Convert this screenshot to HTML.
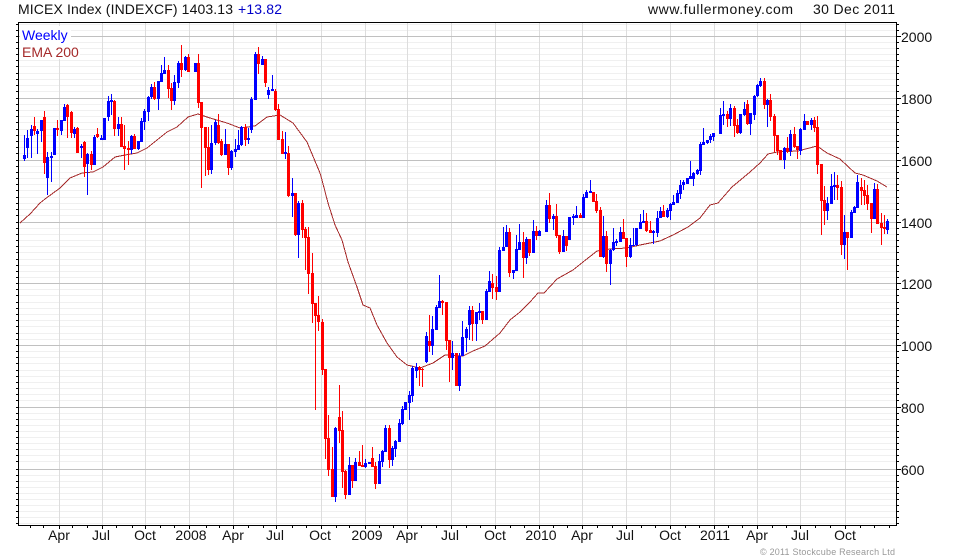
<!DOCTYPE html>
<html><head><meta charset="utf-8"><title>MICEX Index</title>
<style>html,body{margin:0;padding:0;background:#fff;width:980px;height:560px;overflow:hidden}svg{display:block}text{font-family:"Liberation Sans",Arial,sans-serif;font-size:14px;fill:#111}</style></head>
<body>
<svg width="980" height="560" viewBox="0 0 980 560" xmlns="http://www.w3.org/2000/svg">
<g shape-rendering="crispEdges" fill="none">
<path stroke="#f0f0f0" d="M19 24.5H896M19 30.5H896M19 42.5H896M19 48.5H896M19 54.5H896M19 60.5H896M19 66.5H896M19 73.5H896M19 79.5H896M19 85.5H896M19 91.5H896M19 104.5H896M19 110.5H896M19 116.5H896M19 122.5H896M19 129.5H896M19 135.5H896M19 141.5H896M19 147.5H896M19 153.5H896M19 166.5H896M19 172.5H896M19 178.5H896M19 184.5H896M19 190.5H896M19 197.5H896M19 203.5H896M19 209.5H896M19 215.5H896M19 228.5H896M19 234.5H896M19 240.5H896M19 246.5H896M19 252.5H896M19 259.5H896M19 265.5H896M19 271.5H896M19 277.5H896M19 289.5H896M19 295.5H896M19 302.5H896M19 308.5H896M19 314.5H896M19 320.5H896M19 326.5H896M19 333.5H896M19 339.5H896M19 351.5H896M19 357.5H896M19 363.5H896M19 370.5H896M19 376.5H896M19 382.5H896M19 388.5H896M19 394.5H896M19 400.5H896M19 413.5H896M19 419.5H896M19 425.5H896M19 431.5H896M19 437.5H896M19 443.5H896M19 449.5H896M19 455.5H896M19 461.5H896M19 475.5H896M19 481.5H896M19 487.5H896M19 493.5H896M19 499.5H896M19 505.5H896M19 511.5H896M19 517.5H896M19 523.5H896"/>
<path stroke="#dddddd" d="M59.5 23V525M102.5 23V525M145.5 23V525M189.5 23V525M233.5 23V525M276.5 23V525M321.5 23V525M365.5 23V525M407.5 23V525M451.5 23V525M495.5 23V525M539.5 23V525M582.5 23V525M626.5 23V525M670.5 23V525M714.5 23V525M757.5 23V525M800.5 23V525M845.5 23V525"/>
<path stroke="#c0c0c0" d="M19 36.5H896M19 98.5H896M19 160.5H896M19 222.5H896M19 283.5H896M19 345.5H896M19 407.5H896M19 469.5H896"/>
</g>
<rect x="20" y="26" width="51" height="17" fill="#fff"/>
<rect x="20" y="43" width="60" height="16" fill="#fff"/>
<path fill="none" shape-rendering="crispEdges" stroke="#a52a2a" stroke-width="1" d="M20 223L30 214L40 203L45 199L60 188L70 178L82 173L93 172L103 167L115 157L125 155L137 153L147 148L157 140L167 132L177 127L188 117L198 114L210 118L227 123L240 128L255 126L267 117L280 115L293 123L307 142L320 173L322 180L328 203L335 225L342 240L348 262L357 287L363 305L370 308L377 325L387 343L397 357L407 365L420 368L433 363L445 355L463 356L473 351L485 346L500 333L510 320L520 312L530 302L538 293L544 293L557 279L573 270L583 262L597 251L610 249L627 248L640 245L650 243L660 241L673 235L688 227L700 218L710 205L718 203L732 187L750 172L760 163L768 154L777 152L798 151L817 146L827 153L840 159L855 173L863 175L877 181L887 187"/>
<g shape-rendering="crispEdges" fill="none">
<path stroke="#0000ff" d="M24.5 135V161M27.5 130V158M31.5 125V158M37.5 129V154M41.5 120V142M47.5 152V195M51.5 152V182M54.5 128V155M61.5 120V135M64.5 104V121M74.5 127V138M81.5 144V158M87.5 153V195M94.5 135V165M101.5 135V140M104.5 118V140M108.5 96V121M111.5 94V115M118.5 117V136M131.5 135V154M138.5 141V150M141.5 118V142M144.5 109V130M148.5 96V121M151.5 84V99M158.5 81V110M161.5 65V82M164.5 57V74M174.5 75V105M178.5 61V88M185.5 56V71M195.5 63V72M211.5 125V174M215.5 120V145M225.5 129V155M231.5 150V170M235.5 139V157M238.5 130V150M241.5 126V146M248.5 128V144M251.5 97V133M255.5 52V100M262.5 56V65M268.5 87V99M272.5 75V91M285.5 132V159M292.5 178V217M298.5 201V258M335.5 427V502M349.5 457V495M355.5 458V481M365.5 459V468M369.5 462V464M379.5 454V484M382.5 450V467M385.5 425V452M392.5 446V466M395.5 440V457M399.5 419V442M402.5 406V425M405.5 402V410M409.5 391V420M412.5 366V402M416.5 363V378M426.5 332V363M432.5 316V355M436.5 305V330M439.5 275V308M452.5 341V370M459.5 353V391M462.5 321V352M466.5 327V352M469.5 306V340M476.5 312V341M479.5 303V320M486.5 289V320M489.5 271V292M499.5 247V292M503.5 227V251M506.5 225V247M513.5 270V279M516.5 235V271M519.5 224V250M526.5 237V264M533.5 220V253M539.5 230V236M546.5 200V232M553.5 214V230M563.5 230V252M569.5 217V240M573.5 214V225M576.5 206V218M583.5 194V218M586.5 190V198M590.5 180V193M603.5 216V258M610.5 249V285M613.5 228V251M616.5 239V246M620.5 227V242M630.5 238V258M633.5 228V246M636.5 228V246M640.5 214V229M643.5 210V223M653.5 230V244M657.5 211V237M660.5 207V218M667.5 208V218M670.5 203V220M673.5 195V205M677.5 190V203M680.5 180V199M683.5 180V190M687.5 178V184M690.5 161V179M693.5 172V186M697.5 169V175M700.5 142V175M703.5 128V145M707.5 140V144M710.5 134V143M713.5 133V141M720.5 108V134M723.5 101V125M730.5 104V126M740.5 114V134M744.5 102V116M750.5 113V135M754.5 95V120M757.5 84V97M760.5 78V87M767.5 99V127M784.5 147V169M790.5 130V156M800.5 128V155M804.5 114V130M811.5 118V130M827.5 197V220M831.5 174V204M834.5 172V200M844.5 215V259M851.5 210V238M854.5 206V213M857.5 175V208M874.5 183V219M887.5 219V234"/>
<path stroke="#0000ff" stroke-width="3" d="M24.5 155V159M27.5 138V148M31.5 129V136M37.5 131V134M41.5 120V131M47.5 157V178M51.5 156V158M54.5 128V155M61.5 120V131M64.5 107V121M74.5 129V134M81.5 146V148M87.5 154V164M94.5 137V165M101.5 138V140M104.5 118V140M108.5 101V117M111.5 100V102M118.5 124V129M131.5 136V150M138.5 141V149M141.5 121V142M144.5 111V122M148.5 97V112M151.5 87V97M158.5 81V99M161.5 73V82M164.5 70V74M174.5 82V101M178.5 63V83M185.5 57V70M195.5 63V72M211.5 143V170M215.5 122V143M225.5 144V155M231.5 151V168M235.5 149V152M238.5 145V150M241.5 127V145M248.5 138V140M251.5 99V130M255.5 54V100M262.5 59V65M268.5 90V95M272.5 89V91M285.5 152V154M292.5 193V196M298.5 203V235M335.5 428V497M349.5 465V495M355.5 462V481M365.5 463V467M369.5 462V464M379.5 461V484M382.5 451V462M385.5 428V452M392.5 448V460M395.5 441V449M399.5 423V442M402.5 409V424M405.5 402V410M409.5 395V403M412.5 368V396M416.5 367V371M426.5 336V362M432.5 329V346M436.5 307V330M439.5 301V308M452.5 353V358M459.5 356V386M462.5 337V356M466.5 329V338M469.5 310V325M476.5 312V324M479.5 311V313M486.5 291V320M489.5 281V292M499.5 250V292M503.5 247V251M506.5 232V247M513.5 270V273M516.5 249V271M519.5 242V250M526.5 239V258M533.5 231V253M539.5 231V236M546.5 205V232M553.5 216V219M563.5 236V252M569.5 217V240M573.5 216V218M576.5 215V218M583.5 197V218M586.5 192V198M590.5 191V193M603.5 236V257M610.5 250V264M613.5 242V250M616.5 241V243M620.5 232V242M630.5 245V257M633.5 245V246M636.5 228V245M640.5 222V229M643.5 221V223M653.5 231V233M657.5 218V233M660.5 211V218M667.5 210V217M670.5 204V211M673.5 202V205M677.5 193V203M680.5 185V194M683.5 182V185M687.5 178V184M690.5 176V179M693.5 173V179M697.5 170V174M700.5 144V171M703.5 142V145M707.5 140V143M710.5 136V140M713.5 133V137M720.5 115V134M723.5 114V116M730.5 108V119M740.5 114V133M744.5 109V115M750.5 113V124M754.5 96V115M757.5 85V96M760.5 81V86M767.5 100V105M784.5 148V160M790.5 134V151M800.5 129V151M804.5 121V130M811.5 120V125M827.5 203V211M831.5 186V204M834.5 185V187M844.5 232V245M851.5 212V238M854.5 207V213M857.5 182V208M874.5 189V219M887.5 221V230"/>
<path stroke="#ff0000" d="M34.5 117V135M44.5 111V174M57.5 120V136M67.5 104V138M71.5 111V138M77.5 127V153M84.5 141V177M91.5 151V170M97.5 128V138M114.5 100V136M121.5 117V147M124.5 125V170M128.5 141V165M134.5 134V149M154.5 82V100M168.5 65V98M171.5 83V110M181.5 45V77M188.5 54V72M198.5 54V108M201.5 102V188M205.5 127V176M208.5 127V175M218.5 114V144M221.5 139V156M228.5 144V175M245.5 124V146M258.5 47V74M265.5 59V87M275.5 89V111M278.5 104V140M282.5 131V154M288.5 146V197M295.5 193V236M302.5 200V238M305.5 227V270M308.5 227V294M312.5 253V323M315.5 303V410M318.5 296V331M322.5 319V375M325.5 369V459M328.5 415V476M332.5 447V497M339.5 385V443M342.5 411V488M345.5 470V499M352.5 465V488M359.5 451V466M362.5 445V467M372.5 447V467M375.5 462V489M389.5 425V468M419.5 366V386M422.5 368V387M429.5 315V352M442.5 300V315M446.5 302V350M449.5 340V382M456.5 353V386M472.5 306V341M482.5 311V324M492.5 274V299M496.5 276V300M509.5 228V277M523.5 232V278M529.5 239V256M536.5 226V240M549.5 193V223M556.5 204V238M559.5 235V254M566.5 236V251M580.5 213V218M593.5 192V202M596.5 194V213M600.5 207V257M606.5 231V272M623.5 219V239M626.5 238V267M646.5 213V232M650.5 221V233M663.5 205V217M727.5 111V127M734.5 106V137M737.5 119V134M747.5 100V125M764.5 78V109M770.5 94V121M774.5 114V152M777.5 135V155M780.5 150V160M787.5 137V153M794.5 127V148M797.5 146V159M807.5 121V125M814.5 117V132M817.5 116V174M821.5 164V235M824.5 186V225M837.5 175V200M841.5 181V255M847.5 232V270M861.5 178V205M864.5 180V205M867.5 185V210M871.5 203V233M877.5 184V224M881.5 213V245M884.5 215V234"/>
<path stroke="#ff0000" stroke-width="3" d="M34.5 126V131M44.5 117V163M57.5 128V130M67.5 105V117M71.5 112V133M77.5 128V153M84.5 142V167M91.5 154V165M97.5 134V137M114.5 101V129M121.5 124V147M124.5 146V149M128.5 148V150M134.5 136V149M154.5 87V99M168.5 70V89M171.5 88V101M181.5 63V70M188.5 57V72M198.5 63V103M201.5 102V128M205.5 127V148M208.5 147V170M218.5 125V143M221.5 141V155M228.5 144V168M245.5 127V140M258.5 54V64M265.5 59V83M275.5 91V110M278.5 109V140M282.5 139V154M288.5 153V196M295.5 193V235M302.5 203V230M305.5 229V238M308.5 237V274M312.5 273V304M315.5 303V316M318.5 315V322M322.5 322V370M325.5 369V439M328.5 438V470M332.5 469V497M339.5 417V431M342.5 430V472M345.5 471V495M352.5 465V481M359.5 462V466M362.5 465V467M372.5 458V467M375.5 466V484M389.5 428V460M419.5 367V370M422.5 369V370M429.5 341V346M442.5 301V303M446.5 302V341M449.5 340V358M456.5 353V386M472.5 310V324M482.5 311V320M492.5 283V288M496.5 287V292M509.5 232V273M523.5 242V258M529.5 239V253M536.5 231V236M549.5 205V219M556.5 216V236M559.5 235V252M566.5 236V246M580.5 215V218M593.5 192V202M596.5 201V211M600.5 210V257M606.5 236V264M623.5 232V239M626.5 238V257M646.5 221V231M650.5 230V233M663.5 211V217M727.5 114V119M734.5 108V126M737.5 125V133M747.5 104V124M764.5 81V105M770.5 100V117M774.5 116V136M777.5 135V151M780.5 150V160M787.5 148V151M794.5 134V147M797.5 146V150M807.5 121V125M814.5 120V128M817.5 127V165M821.5 164V201M824.5 200V211M837.5 185V188M841.5 187V245M847.5 232V238M861.5 187V191M864.5 190V196M867.5 195V204M871.5 203V219M877.5 189V224M881.5 223V228M884.5 227V229"/>
<path stroke="#000" d="M18.5 22V526M18 22.5H897M18 525.5H897M896.5 22V526"/>
<path stroke="#000" d="M16 24.5H18M16 30.5H18M16 36.5H18M16 42.5H18M16 48.5H18M16 54.5H18M16 60.5H18M16 66.5H18M16 73.5H18M16 79.5H18M16 85.5H18M16 91.5H18M16 98.5H18M16 104.5H18M16 110.5H18M16 116.5H18M16 122.5H18M16 129.5H18M16 135.5H18M16 141.5H18M16 147.5H18M16 153.5H18M16 160.5H18M16 166.5H18M16 172.5H18M16 178.5H18M16 184.5H18M16 190.5H18M16 197.5H18M16 203.5H18M16 209.5H18M16 215.5H18M16 222.5H18M16 228.5H18M16 234.5H18M16 240.5H18M16 246.5H18M16 252.5H18M16 259.5H18M16 265.5H18M16 271.5H18M16 277.5H18M16 283.5H18M16 289.5H18M16 295.5H18M16 302.5H18M16 308.5H18M16 314.5H18M16 320.5H18M16 326.5H18M16 333.5H18M16 339.5H18M16 345.5H18M16 351.5H18M16 357.5H18M16 363.5H18M16 370.5H18M16 376.5H18M16 382.5H18M16 388.5H18M16 394.5H18M16 400.5H18M16 407.5H18M16 413.5H18M16 419.5H18M16 425.5H18M16 431.5H18M16 437.5H18M16 443.5H18M16 449.5H18M16 455.5H18M16 461.5H18M16 469.5H18M16 475.5H18M16 481.5H18M16 487.5H18M16 493.5H18M16 499.5H18M16 505.5H18M16 511.5H18M16 517.5H18M16 523.5H18"/>
<path stroke="#000" d="M897 24.5H899M897 30.5H899M897 36.5H901M897 42.5H899M897 48.5H899M897 54.5H899M897 60.5H899M897 66.5H899M897 73.5H899M897 79.5H899M897 85.5H899M897 91.5H899M897 98.5H901M897 104.5H899M897 110.5H899M897 116.5H899M897 122.5H899M897 129.5H899M897 135.5H899M897 141.5H899M897 147.5H899M897 153.5H899M897 160.5H901M897 166.5H899M897 172.5H899M897 178.5H899M897 184.5H899M897 190.5H899M897 197.5H899M897 203.5H899M897 209.5H899M897 215.5H899M897 222.5H901M897 228.5H899M897 234.5H899M897 240.5H899M897 246.5H899M897 252.5H899M897 259.5H899M897 265.5H899M897 271.5H899M897 277.5H899M897 283.5H901M897 289.5H899M897 295.5H899M897 302.5H899M897 308.5H899M897 314.5H899M897 320.5H899M897 326.5H899M897 333.5H899M897 339.5H899M897 345.5H901M897 351.5H899M897 357.5H899M897 363.5H899M897 370.5H899M897 376.5H899M897 382.5H899M897 388.5H899M897 394.5H899M897 400.5H899M897 407.5H901M897 413.5H899M897 419.5H899M897 425.5H899M897 431.5H899M897 437.5H899M897 443.5H899M897 449.5H899M897 455.5H899M897 461.5H899M897 469.5H901M897 475.5H899M897 481.5H899M897 487.5H899M897 493.5H899M897 499.5H899M897 505.5H899M897 511.5H899M897 517.5H899M897 523.5H899"/>
<path stroke="#000" d="M30.5 526V528M43.5 526V528M59.5 526V529M72.5 526V528M87.5 526V528M102.5 526V529M116.5 526V528M132.5 526V528M145.5 526V529M160.5 526V528M174.5 526V528M189.5 526V529M206.5 526V528M219.5 526V528M233.5 526V529M248.5 526V528M263.5 526V528M276.5 526V529M292.5 526V528M306.5 526V528M321.5 526V529M336.5 526V528M349.5 526V528M365.5 526V529M379.5 526V528M393.5 526V528M407.5 526V529M421.5 526V528M436.5 526V528M451.5 526V529M466.5 526V528M480.5 526V528M495.5 526V529M510.5 526V528M524.5 526V528M539.5 526V529M553.5 526V528M567.5 526V528M582.5 526V529M597.5 526V528M612.5 526V528M626.5 526V529M641.5 526V528M655.5 526V528M670.5 526V529M685.5 526V528M699.5 526V528M714.5 526V529M728.5 526V528M742.5 526V528M757.5 526V529M772.5 526V528M786.5 526V528M800.5 526V529M815.5 526V528M830.5 526V528M845.5 526V529M860.5 526V528M874.5 526V528M889.5 526V528"/>
</g>
<text x="18" y="14" textLength="215" lengthAdjust="spacing">MICEX Index (INDEXCF) 1403.13</text>
<text x="238" y="14" textLength="44" lengthAdjust="spacing" style="fill:#0000c8">+13.82</text>
<text x="648" y="14" textLength="145" lengthAdjust="spacing">www.fullermoney.com</text>
<text x="813" y="14" textLength="82" lengthAdjust="spacing">30 Dec 2011</text>
<text x="22" y="40" style="fill:#0000ff">Weekly</text>
<text x="22" y="57" style="fill:#a52a2a">EMA 200</text>
<text x="901" y="42">2000</text>
<text x="901" y="104">1800</text>
<text x="901" y="166">1600</text>
<text x="901" y="228">1400</text>
<text x="901" y="289">1200</text>
<text x="901" y="351">1000</text>
<text x="901" y="413">800</text>
<text x="901" y="475">600</text>
<g text-anchor="middle">
<text x="59" y="540">Apr</text>
<text x="101" y="540">Jul</text>
<text x="145" y="540">Oct</text>
<text x="191" y="540">2008</text>
<text x="233" y="540">Apr</text>
<text x="275" y="540">Jul</text>
<text x="320" y="540">Oct</text>
<text x="367" y="540">2009</text>
<text x="407" y="540">Apr</text>
<text x="450" y="540">Jul</text>
<text x="495" y="540">Oct</text>
<text x="541" y="540">2010</text>
<text x="582" y="540">Apr</text>
<text x="625" y="540">Jul</text>
<text x="670" y="540">Oct</text>
<text x="715" y="540">2011</text>
<text x="757" y="540">Apr</text>
<text x="800" y="540">Jul</text>
<text x="845" y="540">Oct</text>
</g>
<text x="760" y="555" textLength="135" lengthAdjust="spacing" style="font-size:9px;fill:#999">© 2011 Stockcube Research Ltd</text>
</svg>
</body></html>
